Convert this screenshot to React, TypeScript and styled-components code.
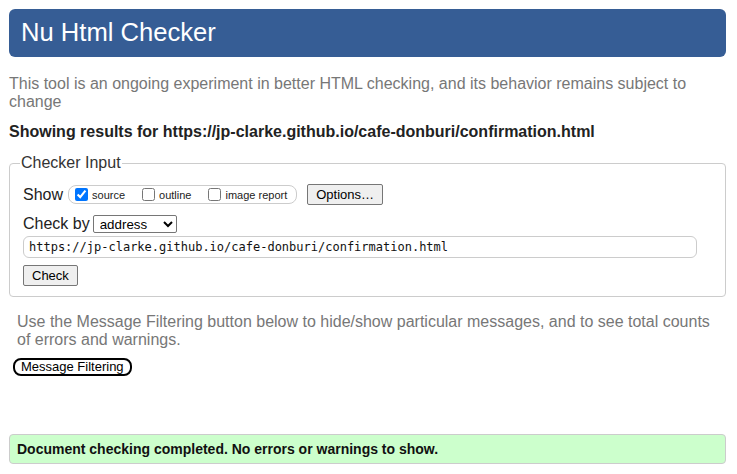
import { createGlobalStyle } from 'styled-components';
import styled from 'styled-components';

const GlobalStyle = createGlobalStyle`
  body {
    margin: 0;
    background: #fff;
    font-family: 'Liberation Sans', Arial, sans-serif;
    color: #222;
  }
`;

const Page = styled.main`
  padding: 9px 11px 0 9px;
  display: flex;
  flex-direction: column;
`;

const Title = styled.h1`
  margin: 0;
  height: 48px;
  box-sizing: border-box;
  padding: 0 12px 2px;
  line-height: 46px;
  font-size: 25.6px;
  font-weight: 400;
  color: #fff;
  background-color: #365d95;
  border-radius: 6px;
`;

type NoteProps = {
  indent?: number;
};
const Note = styled.p<NoteProps>`
  margin: 0;
  margin-left: ${(props) => props.indent ?? 0}px;
  font-size: 16px;
  color: #777;
`;

const Intro = styled(Note)`
  margin-top: 18px;
`;

const FilterNote = styled(Note)`
  margin-top: 16px;
`;

const ResultsFor = styled.p`
  margin: 12px 0 0;
  font-size: 16px;
  font-weight: 700;
  color: #222;
`;

const CheckerFieldset = styled.fieldset`
  margin: 13px 0 0;
  padding: 12px 13px 10px;
  border: 1px solid #ccc;
  border-radius: 4px;
  display: flex;
  flex-direction: column;
  align-items: flex-start;
  min-width: 0;
`;

const Legend = styled.legend`
  padding: 0 1px;
  margin-left: -3px;
  font-size: 16px;
  color: #333;
`;

type RowProps = {
  height: number;
  gapAbove?: number;
};
const Row = styled.div<RowProps>`
  display: flex;
  align-items: center;
  height: ${(props) => props.height}px;
  margin-top: ${(props) => props.gapAbove ?? 0}px;
  font-size: 16px;
  color: #222;
`;

const ShowGroup = styled.span`
  display: inline-flex;
  align-items: center;
  gap: 17px;
  height: 19px;
  box-sizing: border-box;
  margin-left: 5px;
  padding: 0 9px 0 6px;
  border: 1px solid #ccc;
  border-radius: 8px;
`;

const CheckLabel = styled.label`
  display: inline-flex;
  align-items: center;
  gap: 4px;
  font-size: 11px;
  color: #222;

  input {
    width: 13px;
    height: 13px;
    margin: 0;
  }
`;

const NativeButton = styled.button`
  height: 21px;
  padding: 0 8px;
  font-family: 'Liberation Sans', Arial, sans-serif;
  font-size: 13px;
  color: #000;
  background: #efefef;
  border: 1px solid #767676;
  border-radius: 2px;
`;

const OptionsButton = styled(NativeButton)`
  margin-left: 10px;
`;

const AddressSelect = styled.select`
  margin-left: 3px;
  width: 84px;
  height: 18px;
  padding: 0 2px;
  font-family: 'Liberation Sans', Arial, sans-serif;
  font-size: 13.33px;
  color: #000;
  background: #fff;
  border: 1px solid #767676;
  border-radius: 2px;
`;

const UrlInput = styled.input`
  margin-top: 2px;
  width: 674px;
  height: 22px;
  box-sizing: border-box;
  padding: 0 5px;
  font-family: 'DejaVu Sans Mono', 'Liberation Mono', monospace;
  font-size: 12px;
  color: #111;
  border: 1px solid #ccc;
  border-radius: 6px;
`;

const CheckButton = styled(NativeButton)`
  margin-top: 7px;
`;

const FilterButton = styled.button`
  align-self: flex-start;
  margin: 9px 0 0 4px;
  height: 18px;
  padding: 0 6px;
  font-family: 'Liberation Sans', Arial, sans-serif;
  font-size: 13px;
  line-height: 14px;
  color: #000;
  background: #fff;
  border: 2px solid #000;
  border-radius: 8px;
`;

const Success = styled.div`
  margin-top: 58px;
  padding: 6px 7px 6px;
  line-height: 16px;
  font-size: 14px;
  font-weight: 700;
  color: #111;
  background: #ccffcc;
  border: 1px solid #ccc;
  border-radius: 4px;
`;

const checkedUrl = 'https://jp-clarke.github.io/cafe-donburi/confirmation.html';

const showOptions = [
  { name: 'source', checked: true },
  { name: 'outline', checked: false },
  { name: 'image report', checked: false },
];

export default function App() {
  return (
    <>
      <GlobalStyle />
      <Page>
        <Title>Nu Html Checker</Title>
        <Intro>
          This tool is an ongoing experiment in better HTML checking, and its behavior remains
          subject to change
        </Intro>
        <ResultsFor>Showing results for {checkedUrl}</ResultsFor>

        <CheckerFieldset>
          <Legend>Checker Input</Legend>
          <Row height={21}>
            Show
            <ShowGroup>
              {showOptions.map((opt) => (
                <CheckLabel key={opt.name}>
                  <input type="checkbox" defaultChecked={opt.checked} />
                  {opt.name}
                </CheckLabel>
              ))}
            </ShowGroup>
            <OptionsButton type="button">Options…</OptionsButton>
          </Row>
          <Row height={20} gapAbove={9}>
            Check by
            <AddressSelect defaultValue="address">
              <option value="address">address</option>
              <option value="file">file upload</option>
              <option value="text">text input</option>
            </AddressSelect>
          </Row>
          <UrlInput type="url" defaultValue={checkedUrl} />
          <CheckButton type="button">Check</CheckButton>
        </CheckerFieldset>

        <FilterNote indent={8}>
          Use the Message Filtering button below to hide/show particular messages, and to see total
          counts of errors and warnings.
        </FilterNote>
        <FilterButton type="button">Message Filtering</FilterButton>

        <Success>Document checking completed. No errors or warnings to show.</Success>
      </Page>
    </>
  );
}
